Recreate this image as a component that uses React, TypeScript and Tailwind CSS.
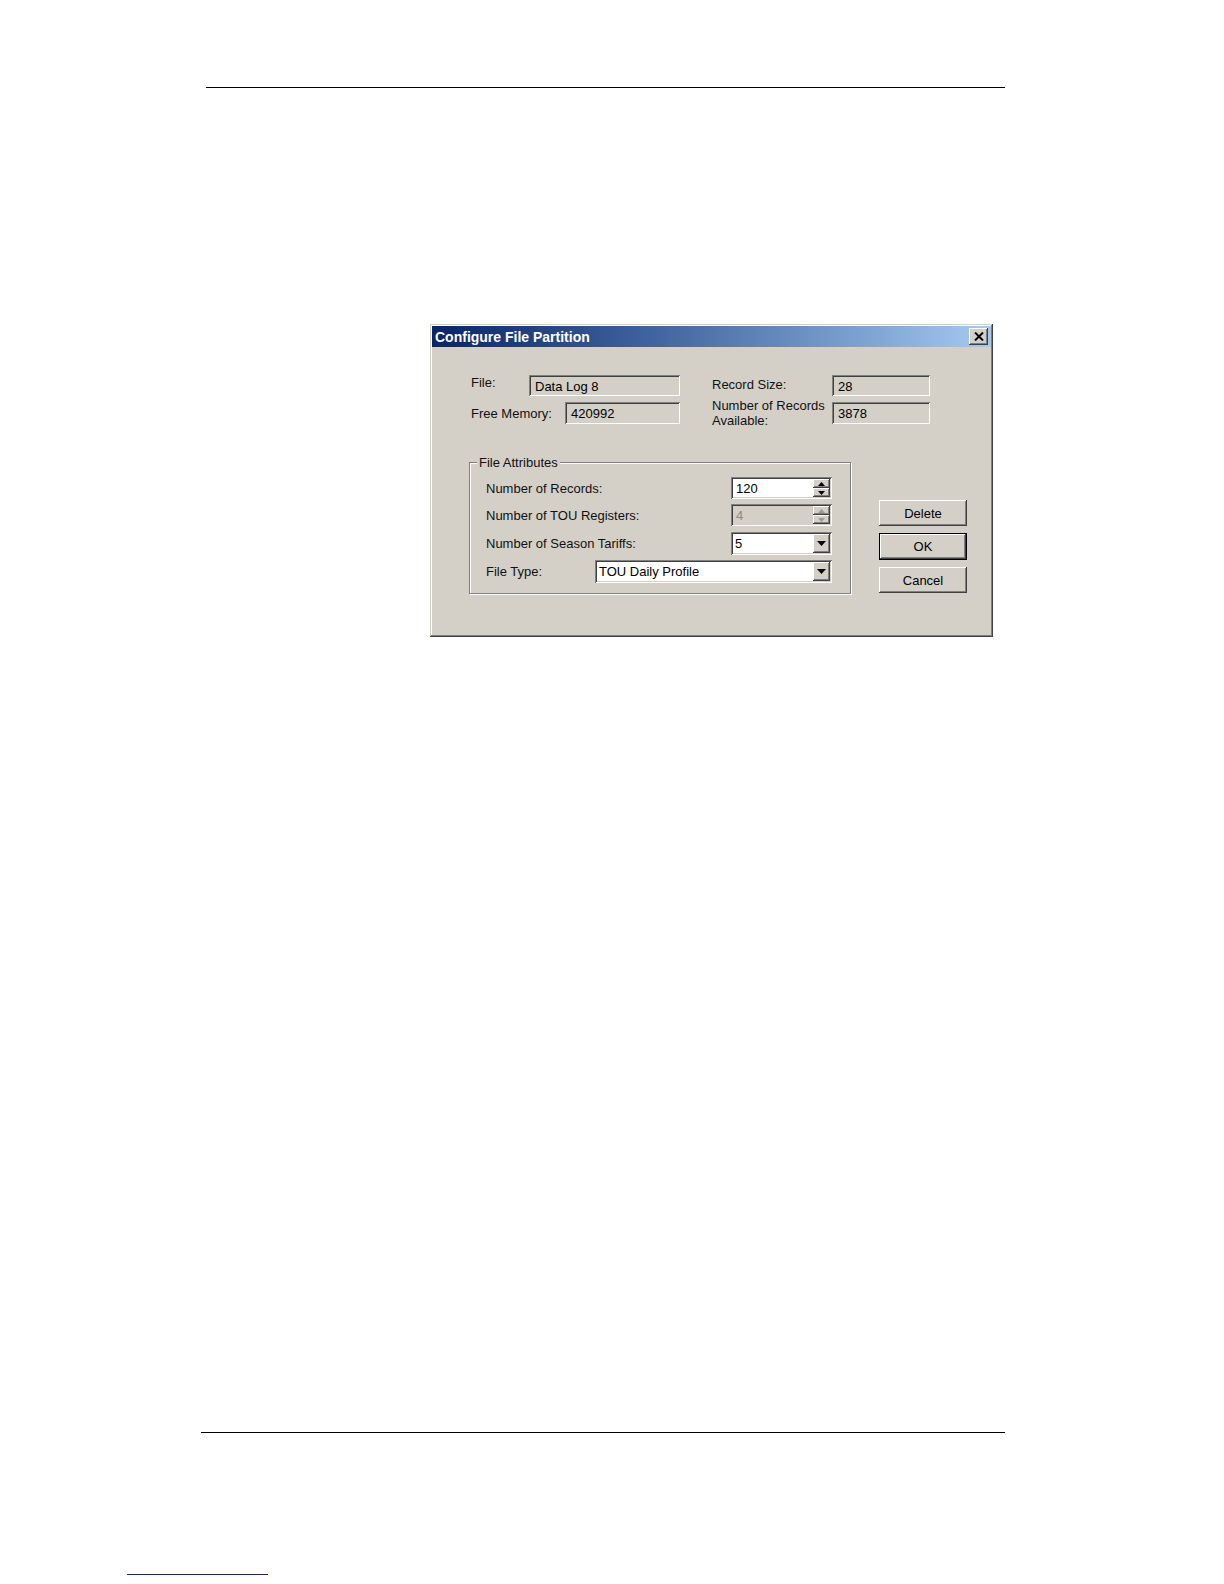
import type { ReactNode } from 'react';

const raised =
  'shadow-[inset_-1px_-1px_#404040,inset_1px_1px_#ffffff,inset_-2px_-2px_#808080,inset_2px_2px_#d4d0c8]';
const sunken =
  'shadow-[inset_1px_1px_#808080,inset_-1px_-1px_#ffffff,inset_2px_2px_#404040,inset_-2px_-2px_#d4d0c8]';

function ReadOnlyField({ value, width, height }: { value: string; width: string; height: string }) {
  return (
    <div className={`${width} ${height} ${sunken} bg-[#d4d0c8] flex items-center pl-[6px] pt-[1px] text-black`}>
      {value}
    </div>
  );
}

function Arrow({ dir, color }: { dir: 'up' | 'down'; color: string }) {
  return (
    <svg width="7" height="4" viewBox="0 0 7 4">
      {dir === 'up' ? <path d="M3.5 0 L7 4 L0 4 Z" fill={color} /> : <path d="M0 0 L7 0 L3.5 4 Z" fill={color} />}
    </svg>
  );
}

function SpinBox({ value, disabled }: { value: string; disabled?: boolean }) {
  const arrow = disabled ? '#9a9a9a' : '#000000';
  return (
    <div className={`w-[101px] h-[22px] ${sunken} ${disabled ? 'bg-[#d4d0c8] text-[#8a8a8a]' : 'bg-white text-black'} flex p-[2px]`}>
      <div className="flex-1 flex items-center pl-[3px] pt-[1px]">{value}</div>
      <div className="w-[17px] flex flex-col">
        <div className={`h-[9px] bg-[#d4d0c8] ${raised} flex items-center justify-center`}>
          <Arrow dir="up" color={arrow} />
        </div>
        <div className={`flex-1 bg-[#d4d0c8] ${raised} flex items-center justify-center`}>
          <Arrow dir="down" color={arrow} />
        </div>
      </div>
    </div>
  );
}

function Combo({ value, width }: { value: string; width: string }) {
  return (
    <div className={`${width} h-[23px] ${sunken} bg-white flex p-[2px]`}>
      <div className="flex-1 flex items-center pl-[2px] pt-[1px] text-black">{value}</div>
      <div className={`w-[17px] bg-[#d4d0c8] ${raised} flex items-center justify-center`}>
        <svg width="9" height="5" viewBox="0 0 9 5">
          <path d="M0 0 L9 0 L4.5 5 Z" fill="#000" />
        </svg>
      </div>
    </div>
  );
}

function Button({ children, isDefault }: { children: ReactNode; isDefault?: boolean }) {
  return isDefault ? (
    <div className="w-[88px] h-[27px] border border-black">
      <div className={`w-full h-full bg-[#d4d0c8] ${raised} flex items-center justify-center text-black`}>
        {children}
      </div>
    </div>
  ) : (
    <div className={`w-[88px] h-[26px] bg-[#d4d0c8] ${raised} flex items-center justify-center text-black`}>
      {children}
    </div>
  );
}

function GroupRow({ label, children, className }: { label: string; children: ReactNode; className?: string }) {
  return (
    <div className={`flex items-center justify-between h-[22px] pl-[16px] pr-[18px] ${className ?? ''}`}>
      <span>{label}</span>
      {children}
    </div>
  );
}

export default function App() {
  return (
    <div className="w-[1224px] h-[1584px] bg-white flex flex-col font-['Liberation_Sans',Arial,sans-serif] text-[13px] leading-[15px] text-[#111]">
      <div className="mt-[87px] ml-[206px] w-[799px] h-px bg-black" />

      <div
        className={`mt-[236px] ml-[430px] w-[563px] h-[313px] bg-[#d4d0c8] p-[2px] flex flex-col shadow-[inset_-1px_-1px_#404040,inset_1px_1px_#d4d0c8,inset_-2px_-2px_#808080,inset_2px_2px_#ffffff]`}
      >
        <div className="h-[21px] bg-linear-to-r from-[#0a246a] to-[#a6caf0] flex items-center justify-between pl-[3px] pr-[3px]">
          <span className="text-white font-bold text-[14px] leading-[16px]">Configure File Partition</span>
          <div className={`w-[19px] h-[17px] bg-[#d4d0c8] ${raised} flex items-center justify-center`}>
            <svg width="10" height="9" viewBox="0 0 10 9">
              <path d="M1 0.5 L9 8.5 M9 0.5 L1 8.5" stroke="#000" strokeWidth="2" />
            </svg>
          </div>
        </div>

        <div className="flex flex-col pt-[28px]">
          <div className="flex items-center h-[21px] pl-[39px]">
            <div className="w-[58px] -mt-[6px]">File:</div>
            <ReadOnlyField value="Data Log 8" width="w-[151px]" height="h-[21px]" />
            <div className="w-[32px]" />
            <div className="w-[120px] -mt-[3px]">Record Size:</div>
            <ReadOnlyField value="28" width="w-[98px]" height="h-[21px]" />
          </div>
          <div className="flex items-center h-[22px] mt-[6px] pl-[39px]">
            <div className="w-[94px]">Free Memory:</div>
            <ReadOnlyField value="420992" width="w-[115px]" height="h-[22px]" />
            <div className="w-[32px]" />
            <div className="w-[120px] leading-[15px]">
              Number of Records
              <br />
              Available:
            </div>
            <ReadOnlyField value="3878" width="w-[98px]" height="h-[22px]" />
          </div>

          <div className="flex mt-[38px]">
            <div className="relative ml-[37px] w-[382px] h-[132px] border border-[#808080] shadow-[inset_1px_1px_#ffffff,1px_1px_#ffffff] pt-[14px]">
              <span className="absolute -top-[8px] left-[7px] bg-[#d4d0c8] px-[2px]">File Attributes</span>
              <GroupRow label="Number of Records:">
                <SpinBox value="120" />
              </GroupRow>
              <GroupRow label="Number of TOU Registers:" className="mt-[5px]">
                <SpinBox value="4" disabled />
              </GroupRow>
              <GroupRow label="Number of Season Tariffs:" className="mt-[6px]">
                <Combo value="5" width="w-[101px]" />
              </GroupRow>
              <GroupRow label="File Type:" className="mt-[6px]">
                <Combo value="TOU Daily Profile" width="w-[237px]" />
              </GroupRow>
            </div>

            <div className="ml-[28px] mt-[38px] flex flex-col gap-[7px]">
              <Button>Delete</Button>
              <Button isDefault>OK</Button>
              <Button>Cancel</Button>
            </div>
          </div>
        </div>
      </div>

      <div className="mt-[795px] ml-[201px] w-[804px] h-px bg-black" />
      <div className="mt-[141px] ml-[127px] w-[141px] h-px bg-[#1f1f99]" />
    </div>
  );
}
